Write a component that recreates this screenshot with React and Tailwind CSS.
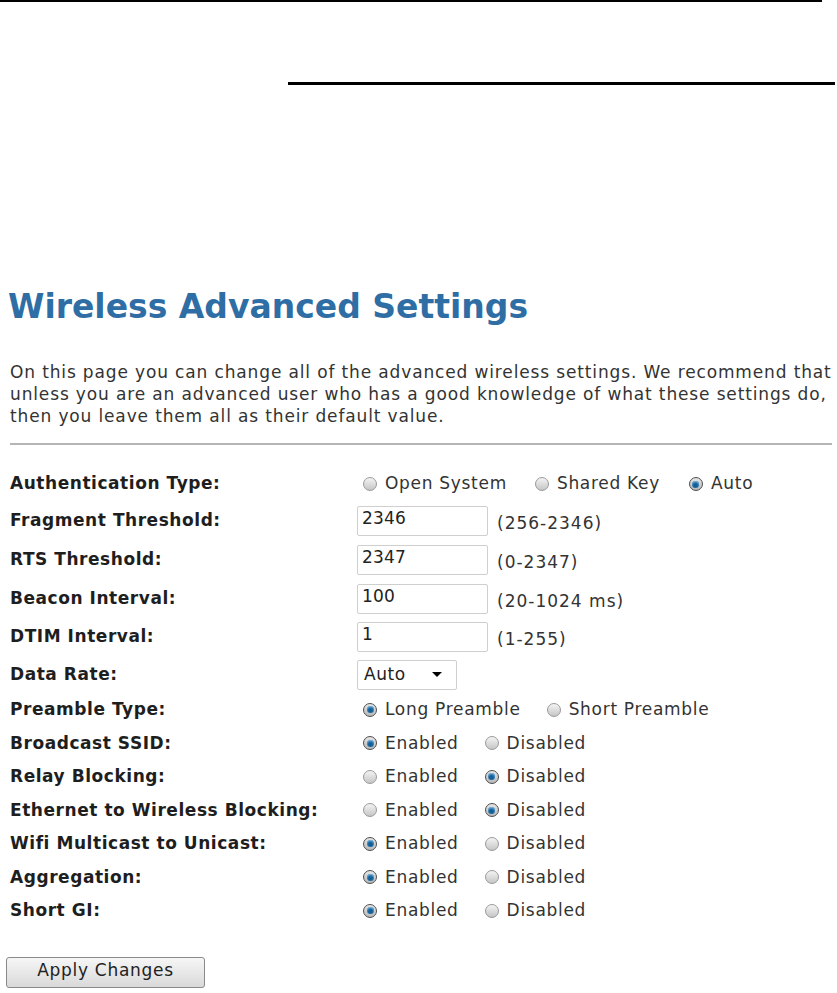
import React from "react";

const font = { fontFamily: '"DejaVu Sans", Verdana, sans-serif' };

function Radio({ checked, label }) {
  return (
    <span className="flex items-center">
      {checked ? (
        <span className="flex h-[14px] w-[14px] items-center justify-center rounded-full border border-[#4d4d4d] bg-gradient-to-b from-[#e6e6e6] to-[#b8b8b8]">
          <span className="h-[7px] w-[7px] rounded-full bg-[#125e96] shadow-[inset_0_1px_2px_#8cc8f2]" />
        </span>
      ) : (
        <span className="h-[14px] w-[14px] rounded-full border border-[#9a9a9a] bg-gradient-to-b from-[#f4f4f4] to-[#c6c6c6]" />
      )}
      <span className="ml-[8px] tracking-[0.7px]">{label}</span>
    </span>
  );
}

function RadioRow({ options }) {
  return (
    <div className="flex items-center pl-[6px]">
      {options.map((o, i) => (
        <div key={o.label} className={i === 0 ? "" : "ml-[26px]"}>
          <Radio checked={o.checked} label={o.label} />
        </div>
      ))}
    </div>
  );
}

function TextBox({ value, hint }) {
  return (
    <div className="flex items-center">
      <div className="flex h-[30px] w-[131px] items-center rounded-[2px] border border-[#cfcfcf] bg-white pl-[4px] pb-[4px] tracking-[0.2px] text-[#222]">
        {value}
      </div>
      <span className="ml-[9px] mt-[6px] tracking-[1px]">{hint}</span>
    </div>
  );
}

function Row({ label, h, children }) {
  return (
    <div className={`flex items-center ${h}`}>
      <div className="w-[347px] font-bold tracking-[0.55px] text-[#1e1e1e]">{label}</div>
      <div className="flex-1">{children}</div>
    </div>
  );
}

const enDis = (en) => [
  { label: "Enabled", checked: en },
  { label: "Disabled", checked: !en },
];

export default function App() {
  return (
    <div className="min-h-[993px] w-[837px] bg-white text-[17px] text-[#333]" style={font}>
      <div className="h-[2px] w-[822px] bg-black" />
      <div className="ml-[288px] mt-[80px] h-[3px] w-[547px] bg-black" />

      <div className="pl-[10px] pr-[5px]">
        <h1 className="mt-[203px] -ml-[2px] text-[33px] font-bold leading-[38px] text-[#2f6ea5]">
          Wireless Advanced Settings
        </h1>

        <p className="mt-[35px] whitespace-nowrap leading-[22px] tracking-[0.86px]">
          On this page you can change all of the advanced wireless settings. We recommend that
          <br />
          unless you are an advanced user who has a good knowledge of what these settings do,
          <br />
          then you leave them all as their default value.
        </p>

        <div className="mt-[16px] h-[2px] bg-[#b5b5b5]" />

        <div className="mt-[22px]">
          <Row label="Authentication Type:" h="h-[34px]">
            <div className="flex items-center pl-[6px]">
              <Radio label="Open System" />
              <div className="ml-[28px]">
                <Radio label="Shared Key" />
              </div>
              <div className="ml-[29px]">
                <Radio label="Auto" checked />
              </div>
            </div>
          </Row>
          <Row label="Fragment Threshold:" h="h-[39px]">
            <TextBox value="2346" hint="(256-2346)" />
          </Row>
          <Row label="RTS Threshold:" h="h-[39px]">
            <TextBox value="2347" hint="(0-2347)" />
          </Row>
          <Row label="Beacon Interval:" h="h-[39px]">
            <TextBox value="100" hint="(20-1024 ms)" />
          </Row>
          <Row label="DTIM Interval:" h="h-[38px]">
            <TextBox value="1" hint="(1-255)" />
          </Row>
          <Row label="Data Rate:" h="h-[37px]">
            <div className="flex h-[30px] w-[100px] items-center justify-between rounded-[2px] border border-[#cfcfcf] bg-white pl-[6px] pr-[14px] tracking-[0.6px] text-[#222]">
              <span>Auto</span>
              <span className="h-0 w-0 border-x-[5px] border-t-[5px] border-x-transparent border-t-black" />
            </div>
          </Row>
          <Row label="Preamble Type:" h="h-[33.5px]">
            <RadioRow
              options={[
                { label: "Long Preamble", checked: true },
                { label: "Short Preamble" },
              ]}
            />
          </Row>
          <Row label="Broadcast SSID:" h="h-[33.5px]">
            <RadioRow options={enDis(true)} />
          </Row>
          <Row label="Relay Blocking:" h="h-[33.5px]">
            <RadioRow options={enDis(false)} />
          </Row>
          <Row label="Ethernet to Wireless Blocking:" h="h-[33.5px]">
            <RadioRow options={enDis(false)} />
          </Row>
          <Row label="Wifi Multicast to Unicast:" h="h-[33.5px]">
            <RadioRow options={enDis(true)} />
          </Row>
          <Row label="Aggregation:" h="h-[33.5px]">
            <RadioRow options={enDis(true)} />
          </Row>
          <Row label="Short GI:" h="h-[33.5px]">
            <RadioRow options={enDis(true)} />
          </Row>
        </div>

        <button
          type="button"
          className="-ml-[4px] mt-[29px] h-[31px] w-[199px] rounded-[3px] border border-[#8a8a8a] bg-gradient-to-b from-[#f6f6f6] to-[#d9d9d9] pb-[2px] text-[17px] tracking-[0.7px] text-[#222]"
        >
          Apply Changes
        </button>
      </div>
    </div>
  );
}
